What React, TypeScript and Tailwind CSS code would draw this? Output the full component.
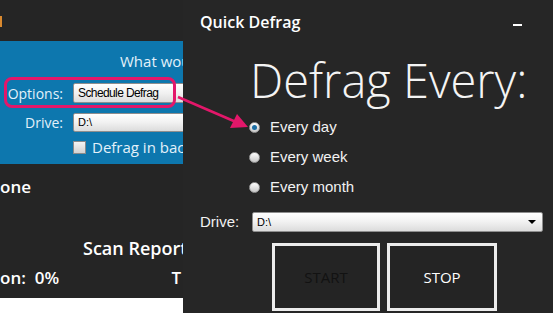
import React from 'react';

const Select = ({ value, width, small }: { value: string; width: string; small?: boolean }) => (
  <div
    className={`${width} h-full shrink-0 flex items-center justify-between border border-[#8e8e8e] rounded-[2px] bg-gradient-to-b from-[#ffffff] via-[#f1f1f1] to-[#dcdcdc] pl-1 pr-1.5 font-['Liberation_Sans',sans-serif] text-black ${small ? 'text-[11px]' : 'text-[12px] tracking-[-0.6px]'}`}
  >
    <span className="whitespace-nowrap">{value}</span>
    <span className="w-0 h-0 border-l-[4px] border-r-[4px] border-t-[4px] border-l-transparent border-r-transparent border-t-black" />
  </div>
);

const Radio = ({ label, checked }: { label: string; checked?: boolean }) => (
  <div className="h-[30px] flex items-center gap-[10px]">
    <span className="w-[11px] h-[11px] rounded-full border border-[#9a9a9a] bg-gradient-to-b from-[#ffffff] to-[#c8c8c8] flex items-center justify-center">
      {checked && <span className="w-[5px] h-[5px] rounded-full bg-[#1c6ea4]" />}
    </span>
    <span className="text-[15px] text-[#f2f2f2] font-['Liberation_Sans',sans-serif]">{label}</span>
  </div>
);

const App: React.FC = () => {
  return (
    <div className="relative w-[553px] h-[313px] bg-[#252525] flex overflow-hidden font-['Open_Sans',sans-serif]">
      {/* Window behind */}
      <div className="w-[183px] h-full shrink-0 overflow-hidden flex flex-col">
        <div className="h-[41px] shrink-0 pt-[16px]">
          <div className="w-[2px] h-[11px] bg-[#d9892f]" />
        </div>
        <div className="h-[123px] shrink-0 bg-[#0d77ae] flex flex-col text-[#e3f1fa] text-[14px]">
          <div className="h-[20px] mt-[10px] pl-[120px] leading-[20px] text-[15px] whitespace-nowrap">What would you like to do?</div>
          <div className="h-[20px] mt-[12px] flex items-center">
            <span className="w-[63px] shrink-0 text-right">Options:</span>
            <div className="ml-[10px] h-full flex">
              <Select value="Schedule Defrag" width="w-[160px]" />
            </div>
          </div>
          <div className="h-[19px] mt-[10px] flex items-center">
            <span className="w-[63px] shrink-0 text-right">Drive:</span>
            <div className="ml-[10px] h-full flex">
              <Select value="D:\" width="w-[160px]" small />
            </div>
          </div>
          <div className="h-[13px] mt-[9px] flex items-center pl-[73px] whitespace-nowrap text-[15px]">
            <span className="w-[13px] h-[13px] shrink-0 border border-[#8a8a8a] bg-gradient-to-b from-[#f4f4f4] to-[#d2d2d2]" />
            <span className="ml-[6px]">Defrag in background</span>
          </div>
        </div>
        <div className="h-[30px] mt-[8px] text-[17px] font-semibold text-white leading-[30px]">one</div>
        <div className="mt-[34px] pl-[83px] h-[24px] text-[18px] font-semibold text-white whitespace-nowrap leading-[24px]">Scan Report</div>
        <div className="mt-[6px] h-[24px] flex justify-between text-[17px] font-semibold text-white leading-[24px] whitespace-nowrap">
          <span>on:&nbsp; 0%</span>
          <span className="pr-[2px]">T</span>
        </div>
        <div className="mt-[8px] flex-1 bg-white" />
      </div>

      {/* Quick Defrag window */}
      <div className="flex-1 h-full flex flex-col bg-[#262626]">
        <div className="h-[44px] shrink-0 flex items-center justify-between pl-[17px] pr-[31px]">
          <span className="text-[16px] font-semibold text-white">Quick Defrag</span>
          <span className="w-[9px] h-[2px] bg-white mt-[6px]" />
        </div>
        <div className="mt-[8px] h-[56px] pl-[67px] text-[47px] font-light text-[#f4f4f4] leading-[56px] whitespace-nowrap">Defrag Every:</div>
        <div className="pl-[66px] flex flex-col mt-[4px]">
          <Radio label="Every day" checked />
          <Radio label="Every week" />
          <Radio label="Every month" />
        </div>
        <div className="h-[20px] mt-[10px] flex items-center pl-[17px] pr-[10px]">
          <span className="w-[52px] shrink-0 text-[15px] text-[#f2f2f2] font-['Liberation_Sans',sans-serif]">Drive:</span>
          <div className="flex-1 h-full flex">
            <Select value="D:\" width="w-full" small />
          </div>
        </div>
        <div className="mt-[11px] flex gap-[7px] pl-[89px]">
          <button className="w-[108px] h-[68px] border-[3px] border-[#ececec] bg-[#242424] text-[15px] text-[#121212]">START</button>
          <button className="w-[110px] h-[68px] border-[3px] border-[#ececec] bg-[#242424] text-[15px] text-white">STOP</button>
        </div>
      </div>

      {/* Annotation overlay */}
      <div className="absolute left-[4px] top-[77px] w-[172px] h-[31px] border-[3px] border-[#e3176a] rounded-[8px]" />
      <svg className="absolute left-0 top-0 pointer-events-none" width="553" height="313">
        <line x1="178" y1="97" x2="236" y2="122" stroke="#e3176a" strokeWidth="2.5" />
        <polygon points="248,127 230,128 237,114" fill="#e3176a" />
      </svg>
    </div>
  );
};

export default App;
